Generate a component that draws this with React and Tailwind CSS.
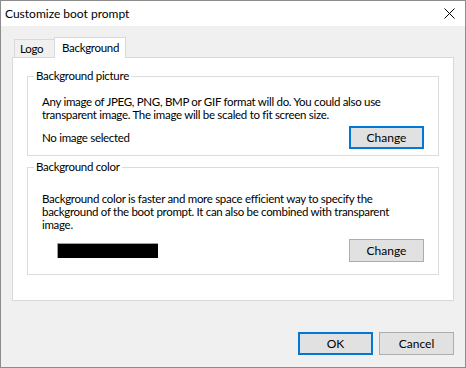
import { useState } from 'react';

const font = "font-['Segoe_UI','Lato',sans-serif]";
const body = 'text-[11.5px] tracking-[-0.3px]';

function WinButton({ children, focused }) {
  return (
    <button
      className={`w-[75px] h-[23px] bg-[#e1e1e1] text-[12px] tracking-normal leading-none text-black ${
        focused ? 'border-2 border-[#0078d7]' : 'border border-[#adadad]'
      }`}
    >
      {children}
    </button>
  );
}

function GroupBox({ title, className, children }) {
  return (
    <fieldset className={`border border-[#dcdcdc] ${className}`}>
      <legend className="ml-[6px] px-[2px] leading-[14px]">{title}</legend>
      {children}
    </fieldset>
  );
}

export default function App() {
  const [tab, setTab] = useState('background');

  return (
    <div
      className={`w-[466px] h-[368px] flex flex-col bg-[#f0f0f0] border border-[#8c8c8c] text-[12px] text-black whitespace-nowrap ${font}`}
    >
      {/* Title bar */}
      <div className="h-[25px] shrink-0 bg-white flex items-center justify-between pl-[4px] pr-[10px]">
        <span className="leading-none">Customize boot prompt</span>
        <svg width="11" height="11" viewBox="0 0 11 11" className="text-black">
          <path d="M0.5 0.5L10.5 10.5M10.5 0.5L0.5 10.5" stroke="currentColor" strokeWidth="1" />
        </svg>
      </div>

      <div className={`flex-1 flex flex-col px-[11px] pt-[11px] ${body}`}>
        {/* Tabs */}
        <div className="flex items-end pl-[2px] h-[20px]">
          <button
            onClick={() => setTab('logo')}
            className="w-[40px] h-[18px] border-l border-t border-[#d9d9d9] pl-[5px] text-left leading-[17px]"
          >
            Logo
          </button>
          <button
            onClick={() => setTab('background')}
            className="relative z-10 w-[72px] h-[21px] -mb-[1px] bg-white border-l border-t border-r border-[#d9d9d9] pl-[7px] text-left leading-[18px]"
          >
            Background
          </button>
        </div>

        {/* Tab page */}
        <div className="h-[244px] bg-white border border-[#d9d9d9] px-[14px] pt-[11px]">
          <GroupBox title="Background picture">
            <div className="pl-[14px] pr-[14px] pt-[12px] pb-[6px]">
              <p className="leading-[13px]">
                Any image of JPEG, PNG, BMP or GIF format will do. You could also use
                <br />
                transparent image. The image will be scaled to fit screen size.
              </p>
              <div className="flex items-center justify-between mt-[5px]">
                <span>No image selected</span>
                <WinButton focused>Change</WinButton>
              </div>
            </div>
          </GroupBox>

          <GroupBox title="Background color" className="mt-[4px]">
            <div className="pl-[14px] pr-[14px] pt-[18px] pb-[12px]">
              <p className="leading-[13px]">
                Background color is faster and more space efficient way to specify the
                <br />
                background of the boot prompt. It can also be combined with transparent
                <br />
                image.
              </p>
              <div className="flex items-center justify-between mt-[8px]">
                <div className="ml-[15px] w-[101px] h-[15px] bg-black border-t border-l border-[#a0a0a0]" />
                <WinButton>Change</WinButton>
              </div>
            </div>
          </GroupBox>
        </div>

        {/* Footer */}
        <div className="flex justify-end gap-[6px] mt-[31px]">
          <WinButton focused>OK</WinButton>
          <WinButton>Cancel</WinButton>
        </div>
      </div>
    </div>
  );
}
